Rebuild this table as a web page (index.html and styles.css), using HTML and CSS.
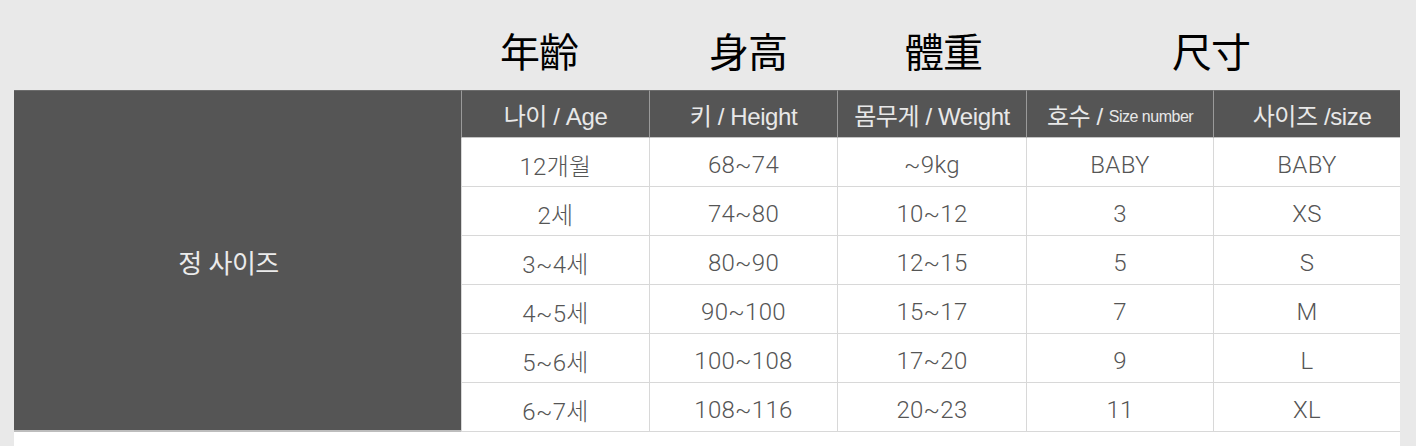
FILE: index.html
```html
<!DOCTYPE html>
<html lang="ko">
<head>
<meta charset="utf-8">
<link rel="stylesheet" href="styles.css">
</head>
<body>
<div class="page">
  <div class="titles">
    <span class="title t1">年齡</span>
    <span class="title t2">身高</span>
    <span class="title t3">體重</span>
    <span class="title t4">尺寸</span>
  </div>
  <div class="chart">
    <div class="side">정 사이즈</div>
    <div class="hd">나이 / Age</div>
    <div class="hd">키 / Height</div>
    <div class="hd">몸무게 / Weight</div>
    <div class="hd">호수 / <small class="sm">Size number</small></div>
    <div class="hd last">사이즈 /size</div>

    <div class="cell">12개월</div><div class="cell">68~74</div><div class="cell">~9kg</div><div class="cell">BABY</div><div class="cell last">BABY</div>
    <div class="cell">2세</div><div class="cell">74~80</div><div class="cell">10~12</div><div class="cell">3</div><div class="cell last">XS</div>
    <div class="cell">3~4세</div><div class="cell">80~90</div><div class="cell">12~15</div><div class="cell">5</div><div class="cell last">S</div>
    <div class="cell">4~5세</div><div class="cell">90~100</div><div class="cell">15~17</div><div class="cell">7</div><div class="cell last">M</div>
    <div class="cell">5~6세</div><div class="cell">100~108</div><div class="cell">17~20</div><div class="cell">9</div><div class="cell last">L</div>
    <div class="cell">6~7세</div><div class="cell">108~116</div><div class="cell">20~23</div><div class="cell">11</div><div class="cell last">XL</div>
  </div>
  <div class="foot"></div>
</div>
</body>
</html>
```
FILE: styles.css
```css
html, body {
  margin: 0;
  padding: 0;
  background: #e9e9e9;
}
body {
  width: 1416px;
  height: 446px;
  overflow: hidden;
}
.page {
  padding-left: 14px;
  width: 1386px;
}
.titles {
  height: 90px;
  display: flex;
  align-items: flex-start;
  padding-top: 24px;
  box-sizing: border-box;
}
.title {
  font-family: "Noto Sans CJK TC", "Noto Sans CJK SC", sans-serif;
  font-size: 40px;
  line-height: 52px;
  color: #000;
  letter-spacing: -1px;
}
.t1 { margin-left: 486px; }
.t2 { margin-left: 131px; }
.t3 { margin-left: 117px; }
.t4 { margin-left: 190px; }

.chart {
  display: grid;
  grid-template-columns: 447px 188px 188px 189px 187px 187px;
  grid-template-rows: 48px repeat(6, 49px);
  background: #fff;
}
.side {
  grid-row: 1 / span 7;
  background: #555;
  color: #ebebeb;
  font-family: "Noto Sans CJK KR", sans-serif;
  font-size: 26px;
  display: flex;
  align-items: center;
  justify-content: center;
  padding-right: 18px;
  padding-top: 2px;
  border-top: 1px solid #6c6c6c;
  border-bottom: 2px solid #bdbdbd;
  letter-spacing: -0.5px;
}
.hd {
  background: #555;
  color: #e8e8e8;
  font-family: "Liberation Sans", "Noto Sans CJK KR", sans-serif;
  font-size: 24px;
  display: flex;
  align-items: center;
  justify-content: center;
  border-left: 1px solid #9a9a9a;
  border-top: 1px solid #6c6c6c;
  border-bottom: 1px solid #c4c4c4;
  white-space: nowrap;
  letter-spacing: -0.4px;
  padding-top: 1px;
}
.hd.last { padding-left: 10px; }
.sm {
  font-size: 16px;
  margin-left: 6px;
  margin-top: 5px;
  letter-spacing: -0.5px;
}
.cell {
  background: #fff;
  color: #555;
  font-family: "Roboto", "Noto Sans CJK KR", sans-serif;
  font-weight: 300;
  font-size: 24px;
  display: flex;
  align-items: center;
  justify-content: center;
  border-left: 1px solid #d8d8d8;
  border-bottom: 1px solid #d8d8d8;
  letter-spacing: 0.3px;
  padding-top: 5px;
}
.foot {
  height: 20px;
  background: #fff;
}
```
